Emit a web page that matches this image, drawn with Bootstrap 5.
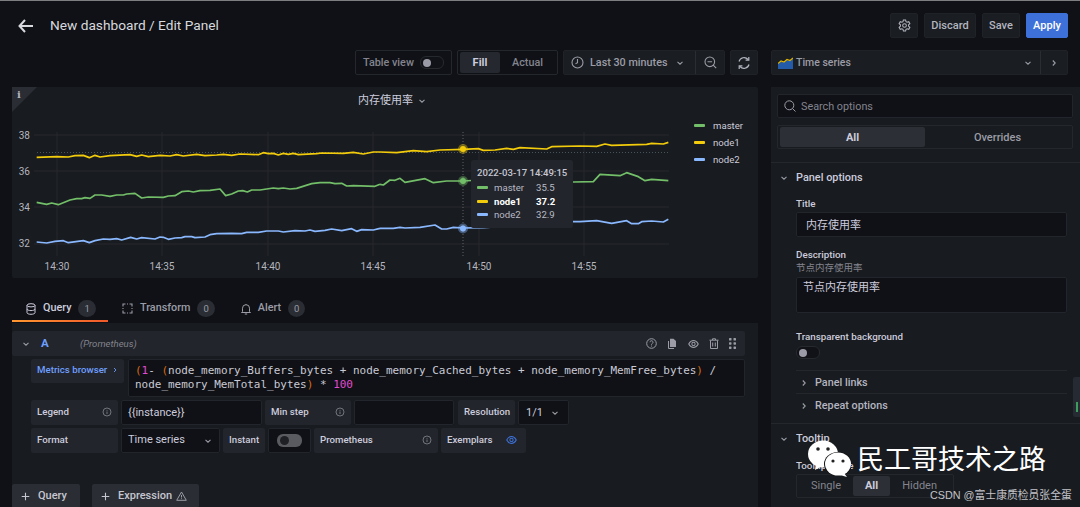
<!doctype html>
<html lang="zh">
<head>
<meta charset="utf-8">
<title>Edit Panel</title>
<link href="https://cdn.jsdelivr.net/npm/bootstrap@5.3.0/dist/css/bootstrap.min.css" rel="stylesheet">
<style>
html,body{height:507px;overflow:hidden;}
body{background:#111217;color:#ccccdc;font-family:Roboto,"Noto Sans CJK SC",sans-serif;font-size:11px;line-height:1.2;}
.gf-page{height:507px;border-top:1px solid #7d7e80;position:relative;overflow:hidden;background:#0f1116;}
.gf-head{height:49px;padding:0 12px 0 18px;}
.gf-title{font-size:13.7px;color:#d8d9de;margin-left:17px;font-weight:400;}
.gf-headbtns{gap:6px;}
.gf-btn{height:25px;padding:0;background:#1a1d21;border:1px solid #1f2227;border-radius:2px;color:#b4b5c0;font-weight:500;font-size:11px;display:flex;align-items:center;white-space:nowrap;}
.gf-apply{background:#3d71d9;border-color:#3d71d9;color:#fff;}
.gf-w28{width:28px;}.gf-w52{width:52px;}.gf-w38{width:38px;}.gf-w42{width:42px;}
.gf-w97{width:97px;}.gf-w101{width:101px;}.gf-w162{width:162px;}.gf-w297{width:297px;}
.gf-w29{width:29px;}.gf-w27{width:27px;}.gf-w93{width:93px;}.gf-w87{width:87px;}.gf-w141{width:141px;}.gf-w86{width:86px;}.gf-w100{width:100px;}.gf-w57{width:57px;}.gf-w51{width:51px;}.gf-w99{width:99px;}.gf-w43{width:43px;}.gf-w124{width:124px;}.gf-w85{width:85px;}.gf-w68{width:68px;}.gf-w107{width:107px;}
.gf-main{align-items:flex-start;}
.gf-left{width:746px;margin-left:12px;flex:none;}
.gf-right{width:309px;margin-left:13px;flex:none;}
.gf-bar{height:25px;gap:5px;}
.gf-outline{border:1px solid #24272c;border-radius:2px;height:25px;white-space:nowrap;}
.gf-dim{color:#83848e;font-weight:500;font-size:10.8px;}
.gf-nudge{padding-top:2px;}
.gf-tableview{gap:6px;padding-left:7px;}
.gf-fillwrap{padding:0 2px;}
.gf-fillon{background:#25282e;color:#ccccdc;font-weight:700;font-size:11px;height:21px;width:40px;border-radius:2px;}
.gf-timeicon{margin-left:7px;}
.gf-timetext{margin-left:6px;color:#9b9ca6;}
.gf-timechev{margin-left:7px;}
.gf-divl{border-left:1px solid #2a2d33;}
.gf-chart{margin-top:12px;height:191px;background:#181b1f;border-radius:2px;position:relative;}
.gf-chart svg.gf-plot{display:block;}
.gf-ptitle{position:absolute;left:346px;top:7px;font-size:11px;color:#ccccdc;}
.gf-legend{position:absolute;left:682px;top:30px;font-size:9.6px;color:#ccccdc;}
.gf-legrow{height:17px;}
.gf-sw{display:inline-block;width:11px;height:3px;border-radius:1px;flex:none;}
.gf-green{background:#73bf69;}.gf-yellow{background:#f2cc0c;}.gf-blue{background:#8ab8ff;}
.gf-tip{position:absolute;left:459px;top:73px;width:102px;height:68px;background:#22252b;border-radius:2px;padding:6px 6px;font-size:9.6px;color:#b9bac5;}
.gf-tip .gf-tt{font-weight:500;color:#c6c7d2;margin-bottom:1px;white-space:nowrap;line-height:14px;}
.gf-tiprow{height:13.5px;}
.gf-tipname{width:42px;margin-left:6px;}
.gf-tabs{height:45px;padding-top:17px;}
.gf-tab{height:27px;padding:2px 7px 0 14px;color:#9b9ca6;font-weight:500;font-size:10.8px;gap:7px;margin-right:5px;border-bottom:2px solid transparent;}
.gf-tab-on{color:#ccccdc;border-image:linear-gradient(90deg,#ff9830,#f0582a) 1;width:96px;margin-right:0;}
.gf-count{background:#2a2d33;color:#9b9ca6;font-size:9.5px;font-weight:400;border-radius:9px;padding:3px 6px;line-height:11px;}
.gf-query{background:#181b1f;height:185px;padding-top:8px;}
.gf-qhead{height:25px;background:#22252b;width:733px;border-radius:2px;padding:0 9px;}
.gf-a{color:#6e9fff;font-weight:700;font-size:11.5px;margin-left:10px;width:39px;}
.gf-ds{color:#83848e;font-style:italic;font-size:9.6px;}
.gf-qicons{gap:10px;}
.gf-rows{padding-left:19px;width:733px;}
.gf-rowa{margin-top:3px;gap:4px;}
.gf-rowb{margin-top:3px;gap:3px;}
.gf-lab{height:25px;background:#22252b;border-radius:2px;font-weight:500;font-size:9.7px;color:#ccccdc;padding:0 6px 2px;white-space:nowrap;}
.gf-input{height:25px;background:#101116;border:1px solid #22252b;border-radius:2px;color:#ccccdc;font-size:11px;padding:0 6px;box-shadow:none;min-height:0;}
.gf-input:focus{background:#101116;color:#ccccdc;border-color:#22252b;box-shadow:none;}
.gf-code{background:#101116;border:1px solid #22252b;border-radius:2px;height:38px;width:617px;padding:4px 6px;font-family:"DejaVu Sans Mono","Liberation Mono",monospace;font-size:10.97px;line-height:14px;color:#c9cad5;white-space:nowrap;}
.gf-o{color:#d96a10;}.gf-m{color:#e24bd1;}
.gf-link{color:#6e9fff;height:24px;gap:5px;}
.gf-res{margin-left:1px;}
.gf-box{height:25px;background:#101116;border:1px solid #22252b;border-radius:2px;font-size:11px;}
.gf-box-res{padding:0 8px 0 7px;}
.gf-box-fmt{padding:0 6px 2px;}
.gf-box-fmt svg{margin-top:2px;}
.gf-ex{gap:14px;}
.gf-toggle{width:24px;height:12px;border-radius:6px;position:relative;flex:none;}
.gf-toggle::after{content:"";position:absolute;top:2px;left:2px;width:8px;height:8px;border-radius:50%;background:#9a9ba6;}
.gf-toggle-a{background:#111217;border:1px solid #262a2f;height:13px;}
.gf-toggle-b{background:#5a5b60;width:25px;height:13px;}
.gf-toggle-b::after{background:#1e2025;top:2px;left:3px;width:9px;height:9px;}
.gf-addrow{margin-top:31px;gap:12px;}
.gf-add{height:24px;background:#2a2d33;color:#c5c6d0;font-weight:500;font-size:11px;border-radius:2px;padding:0 9px;gap:8px;}
.gf-warn{margin-left:-4px;}
.gf-tsicon{margin-left:6px;}
.gf-tstext{margin-left:3px;color:#9b9ca6;font-size:10.5px;}
.gf-tschev{margin-right:7px;}
.gf-side{margin-top:12px;background:#181b1f;height:420px;}
.gf-sidetop{padding:7px 7px 13px 6px;}
.gf-search{height:24px;background:#101116;border:1px solid #22252b;border-radius:2px;padding:0 6px;gap:5px;color:#83848e;font-size:10.8px;}
.gf-seg{height:24px;margin-top:7px;border:1px solid #24272c;border-radius:2px;padding:1px 2px;}
.gf-seg>div{flex:1;height:20px;color:#9b9ca6;font-weight:500;font-size:11px;border-radius:2px;padding-top:2px;}
.gf-seg>.gf-segon{background:#2c2f35;color:#ccccdc;font-weight:700;}
.gf-sec{border-top:1px solid #24272c;padding-right:13px;}
.gf-sec2{margin-top:7px;}
.gf-sechead{height:28px;padding:2px 0 0 8px;font-weight:500;font-size:10.9px;color:#ccccdc;gap:7px;}
.gf-body{padding-left:25px;}
.gf-flabel{height:16px;font-weight:500;font-size:9.8px;color:#ccccdc;}
.gf-fl1{margin-top:5px;}
.gf-titleinput{padding:0 6px 2px 9px;}
.gf-fl2{margin-top:10px;height:15px;}
.gf-sub{height:13px;color:#83848e;font-size:9.5px;}
.gf-ta{height:36px;resize:none;padding:3px 6px 0;line-height:14px;}
.gf-ta-wrap{margin-top:2px;}
.gf-fl3{margin-top:17px;height:14px;}
.gf-togwrap{margin-top:2px;}
.gf-sublink{height:23px;border-top:1px solid #24272c;font-weight:500;font-size:10.8px;color:#b4b5c0;padding:2px 0 0 3px;gap:6px;}
.gf-sl1{margin-top:11px;}
.gf-fl4{margin-top:6px;}
.gf-radio{width:158px;height:24px;border:1px solid #24272c;border-radius:2px;padding:1px 2px;}
.gf-radio>div{height:20px;padding:0 12px;color:#83848e;font-size:11px;}
.gf-radio>.gf-radon{background:#2c2f35;color:#ccccdc;font-weight:700;border-radius:2px;}
.gf-thumb{position:absolute;left:1073px;top:376px;width:7px;height:40px;background:#252a33;border-radius:2px 0 0 2px;}
.gf-thumb i{position:absolute;left:3px;top:25px;width:2px;height:10px;background:#3f9c5f;}
.gf-mark{position:absolute;left:808px;top:437px;gap:6px;color:#fff;font-size:27px;line-height:40px;font-family:"Noto Sans CJK SC",sans-serif;font-weight:400;white-space:nowrap;}
.gf-csdn{position:absolute;left:930px;top:487px;color:#c2c3c8;font-size:10.8px;line-height:15px;white-space:nowrap;font-family:"Liberation Sans","Noto Sans CJK SC",sans-serif;}
svg{flex:none;}
</style>
</head>
<body>
<svg width="0" height="0" class="d-none">
<symbol id="i-info" viewBox="0 0 12 12"><circle cx="6" cy="6" r="4.8" fill="none" stroke="currentColor"/><path d="M6 5.400v3M6 3.500v1" stroke="currentColor"/></symbol>
<symbol id="i-down" viewBox="0 0 10 10"><path d="M2.500 3.800 5 6.200l2.500-2.400" fill="none" stroke="currentColor" stroke-width="1.100"/></symbol>
<symbol id="i-right" viewBox="0 0 10 10"><path d="M3.800 2.500 6.200 5 3.800 7.500" fill="none" stroke="currentColor" stroke-width="1.100"/></symbol>
<symbol id="i-plus" viewBox="0 0 10 10"><path d="M5 .8v8.400M.8 5h8.400" fill="none" stroke="currentColor" stroke-width="1.200"/></symbol>
<symbol id="i-eye" viewBox="0 0 12 10"><path d="M.8 5C2.200 2.400 4 1.200 6 1.200S9.800 2.400 11.200 5C9.800 7.600 8 8.800 6 8.800S2.200 7.600.8 5Z" fill="none" stroke="currentColor" stroke-width="1.100"/><circle cx="6" cy="5" r="1.800" fill="none" stroke="currentColor" stroke-width="1.100"/></symbol>
</svg>
<div class="gf-page">
  <div class="gf-head d-flex align-items-center">
    <svg width="15" height="14" viewBox="0 0 15 14" color="#d8d9de"><path d="M7 1 1.500 7 7 13M2 7h13" fill="none" stroke="currentColor" stroke-width="2"/></svg>
    <h1 class="gf-title mb-0">New dashboard / Edit Panel</h1>
    <div class="ms-auto d-flex gf-headbtns">
      <div class="gf-btn gf-w28 justify-content-center">
        <svg width="13" height="13" viewBox="0 0 14 14"><path d="M5.800 1h2.400l.4 1.800 1.200.7 1.800-.6L12.800 5l-1.400 1.200v1.600L12.800 9l-1.200 2.100-1.800-.6-1.200.7L8.200 13H5.800l-.4-1.800-1.200-.7-1.800.6L1.200 9l1.400-1.200V6.200L1.200 5l1.200-2.100 1.800.6 1.200-.7Z" fill="none" stroke="#b4b5c0" stroke-width="1.100"/><circle cx="7" cy="7" r="2" fill="none" stroke="#b4b5c0" stroke-width="1.100"/></svg>
      </div>
      <div class="gf-btn gf-w52 justify-content-center">Discard</div>
      <div class="gf-btn gf-w38 justify-content-center">Save</div>
      <div class="gf-btn gf-w42 gf-apply justify-content-center">Apply</div>
    </div>
  </div>
  <div class="gf-main d-flex">
    <div class="gf-left">
      <div class="gf-bar d-flex justify-content-end">
        <div class="gf-outline gf-w97 gf-tableview d-flex align-items-center gf-dim"><span class="gf-nudge">Table view</span> <span class="gf-toggle gf-toggle-a"></span></div>
        <div class="gf-outline gf-w101 gf-fillwrap d-flex align-items-center">
          <div class="gf-fillon d-flex align-items-center justify-content-center">Fill</div>
          <div class="gf-dim gf-nudge flex-fill text-center">Actual</div>
        </div>
        <div class="gf-btn gf-w162 gf-dim">
          <svg class="gf-timeicon" width="13" height="13" viewBox="0 0 13 13"><circle cx="6.500" cy="6.500" r="5.500" fill="none" stroke="#9b9ca6" stroke-width="1.100"/><path d="M6.500 3v3.700l-2 1" fill="none" stroke="#9b9ca6" stroke-width="1.100"/></svg>
          <span class="gf-timetext gf-nudge">Last 30 minutes</span>
          <svg class="gf-timechev" width="10" height="10" color="#9b9ca6"><use href="#i-down"/></svg>
          <div class="gf-w29 gf-divl ms-auto d-flex align-items-center justify-content-center h-100">
            <svg width="13" height="13" viewBox="0 0 13 13"><circle cx="5.800" cy="5.800" r="4.800" fill="none" stroke="#9b9ca6" stroke-width="1.100"/><path d="M3.500 5.800h4.600M9.200 9.200l3 3" fill="none" stroke="#9b9ca6" stroke-width="1.100"/></svg>
          </div>
        </div>
        <div class="gf-btn gf-w28 justify-content-center">
          <svg width="14" height="14" viewBox="0 0 14 14"><path d="M2 5.500A5.200 5.200 0 0 1 11 3.500M12 8.500A5.200 5.200 0 0 1 3 10.500" fill="none" stroke="#b4b5c0" stroke-width="1.200"/><path d="M11.800 1v3.200H8.600M2.200 13V9.800h3.200" fill="none" stroke="#b4b5c0" stroke-width="1.200"/></svg>
        </div>
      </div>
      <div class="gf-chart">
        <svg class="gf-plot" width="746" height="191" viewBox="12 87 746 191" font-family="Roboto,sans-serif">
          <polygon points="12,87 37,87 12,112" fill="#2a2d33"/>
          <text x="17" y="98" font-size="10" font-weight="700" font-family="'DejaVu Serif',serif" fill="#b4b5c0">i</text>
          <g stroke="#26292e" stroke-width="1">
            <path d="M34 135H669M34 171H669M34 207H669M34 244H669"/>
            <path d="M57 132V256M162 132V256M268 132V256M373 132V256M479 132V256M584 132V256"/>
          </g>
          <path d="M37 152.500H669" stroke="#47535a" stroke-dasharray="1 2" fill="none"/>
          <path d="M463 132V256" stroke="#5f6269" stroke-dasharray="1 2" fill="none"/>
          <g fill="#b4b5be" font-size="10" text-anchor="end"><text x="30" y="138.500">38</text><text x="30" y="174.500">36</text><text x="30" y="210.500">34</text><text x="30" y="246.500">32</text></g>
          <g fill="#b4b5be" font-size="10" text-anchor="middle"><text x="57" y="270">14:30</text><text x="162" y="270">14:35</text><text x="268" y="270">14:40</text><text x="373" y="270">14:45</text><text x="479" y="270">14:50</text><text x="584" y="270">14:55</text></g>
          <g fill="none" stroke-width="1.700" stroke-linejoin="round">
            <g transform="translate(0 120) scale(.33333)">
              <polyline vector-effect="non-scaling-stroke" stroke="#f2cc0c" points="110,112 170,110 205,111 225,107 250,106 268,113 285,106 300,111 330,107 390,104 410,109 425,105 445,110 480,106 510,108 530,104 550,108 590,103 615,107 650,105 670,103 695,106 720,102 775,104 790,98 805,101 820,100 835,105 850,100 865,103 880,100 895,104 950,101 965,99 1030,100 1060,97 1090,102 1120,96 1140,96"/>
              <polyline vector-effect="non-scaling-stroke" stroke="#73bf69" points="110,247 140,253 155,249 175,254 210,240 230,236 245,236 255,233 270,235 285,225 305,225 330,229 350,225 370,225 380,222 405,220 425,234 445,231 490,232 505,228 525,227 545,215 565,213 580,216 600,212 630,211 660,207 677,227 695,222 715,213 728,212 742,216 755,210 780,210 820,204 835,206 850,204 870,207 890,205 935,191 960,188 990,188 1005,191 1025,190 1040,198 1060,197 1125,199 1140,193"/>
              <polyline vector-effect="non-scaling-stroke" stroke="#8ab8ff" points="110,366 140,369 165,364 190,362 205,368 250,362 268,368 285,362 310,357 330,358 350,356 365,360 392,352 410,357 425,353 465,357 480,351 490,352 505,358 525,354 545,353 555,350 575,350 585,353 615,351 630,344 650,341 695,340 725,341 740,337 775,337 800,333 835,333 850,336 885,332 915,333 930,330 945,334 975,331 995,327 1025,332 1055,326 1070,334 1085,329 1120,330 1140,325"/>
            </g>
            <g transform="translate(380 120) scale(.33333)">
              <polyline vector-effect="non-scaling-stroke" stroke="#f2cc0c" points="0,96 50,98 100,92 140,95 180,90 250,88 295,86 310,91 345,90 380,85 400,88 420,83 500,87 515,80 600,78 650,79 675,72 695,76 800,73 815,70 850,72 865,67"/>
              <polyline vector-effect="non-scaling-stroke" stroke="#73bf69" points="0,193 10,195 30,180 45,181 60,175 75,187 135,176 160,188 200,183 250,183 300,180 580,186 640,185 660,163 720,167 740,158 775,170 795,182 815,178 865,182"/>
              <polyline vector-effect="non-scaling-stroke" stroke="#8ab8ff" points="0,325 40,325 60,322 75,324 120,322 165,315 185,327 200,327 220,322 250,324 310,323 580,305 600,305 650,302 695,310 740,302 755,311 775,311 785,305 815,303 850,306 865,298"/>
            </g>
          </g>
          <circle cx="463" cy="149" r="5" fill="#f2cc0c" opacity=".4"/><circle cx="463" cy="149" r="3" fill="#f2cc0c"/>
          <circle cx="463" cy="181" r="5" fill="#73bf69" opacity=".4"/><circle cx="463" cy="181" r="3" fill="#73bf69"/>
          <circle cx="463" cy="228.500" r="5" fill="#8ab8ff" opacity=".4"/><circle cx="463" cy="228.500" r="3" fill="#8ab8ff"/>
        </svg>
        <div class="gf-ptitle d-flex align-items-center gap-1">内存使用率 <svg width="10" height="10" color="#9b9ca6"><use href="#i-down"/></svg></div>
        <div class="gf-legend">
          <div class="gf-legrow d-flex align-items-center gap-2"><span class="gf-sw gf-green"></span>master</div>
          <div class="gf-legrow d-flex align-items-center gap-2"><span class="gf-sw gf-yellow"></span>node1</div>
          <div class="gf-legrow d-flex align-items-center gap-2"><span class="gf-sw gf-blue"></span>node2</div>
        </div>
        <div class="gf-tip">
          <div class="gf-tt">2022-03-17 14:49:15</div>
          <div class="gf-tiprow d-flex align-items-center"><span class="gf-sw gf-green"></span><span class="gf-tipname">master</span><span>35.5</span></div>
          <div class="gf-tiprow d-flex align-items-center fw-bold text-white"><span class="gf-sw gf-yellow"></span><span class="gf-tipname">node1</span><span>37.2</span></div>
          <div class="gf-tiprow d-flex align-items-center"><span class="gf-sw gf-blue"></span><span class="gf-tipname">node2</span><span>32.9</span></div>
        </div>
      </div>
      <div class="gf-tabs d-flex">
        <div class="gf-tab gf-tab-on d-flex align-items-center">
          <svg width="10" height="12" viewBox="0 0 10 12"><ellipse cx="5" cy="2.300" rx="4" ry="1.600" fill="none" stroke="#ccccdc"/><path d="M1 2.300v7.400c0 .9 1.800 1.600 4 1.600s4-.7 4-1.600V2.300M1 6c0 .9 1.800 1.600 4 1.600S9 6.900 9 6" fill="none" stroke="#ccccdc"/></svg>
          <span>Query</span><span class="gf-count">1</span>
        </div>
        <div class="gf-tab d-flex align-items-center">
          <svg width="11" height="11" viewBox="0 0 11 11"><path d="M1 3.500V1h2.500M7.500 1H10v2.500M10 7.500V10H7.500M3.500 10H1V7.500M5 1h1M5 10h1M1 5v1M10 5v1" fill="none" stroke="#9b9ca6" stroke-width="1.100"/></svg>
          <span>Transform</span><span class="gf-count">0</span>
        </div>
        <div class="gf-tab d-flex align-items-center">
          <svg width="10" height="12" viewBox="0 0 10 12"><path d="M1.500 8.500V5.200a3.500 3.500 0 0 1 7 0v3.300l1 1H.5ZM5 1v.6M3.800 11h2.400" fill="none" stroke="#9b9ca6"/></svg>
          <span>Alert</span><span class="gf-count">0</span>
        </div>
      </div>
      <div class="gf-query">
        <div class="gf-qhead d-flex align-items-center">
          <svg width="10" height="10" color="#9b9ca6"><use href="#i-down"/></svg>
          <span class="gf-a">A</span><span class="gf-ds">(Prometheus)</span>
          <div class="gf-qicons ms-auto d-flex align-items-center" color="#9b9ca6">
            <svg width="11" height="11" viewBox="0 0 11 11"><circle cx="5.500" cy="5.500" r="4.800" fill="none" stroke="#9b9ca6"/><path d="M4 4.200a1.500 1.500 0 1 1 2.300 1.300c-.5.300-.8.600-.8 1.200M5.500 7.600v.9" fill="none" stroke="#9b9ca6"/></svg>
            <svg width="11" height="11" viewBox="0 0 11 11"><path d="M3 .8h3.500L9 3v6H3Z" fill="#9b9ca6"/><path d="M1.500 3v7.500H7" fill="none" stroke="#9b9ca6"/></svg>
            <svg width="11" height="10" color="#9b9ca6"><use href="#i-eye"/></svg>
            <svg width="10" height="11" viewBox="0 0 10 11"><path d="M.5 2.200h9M3.500 2V.8h3V2M1.500 2.500v8h7v-8M3.700 4.500v4M6.300 4.500v4" fill="none" stroke="#9b9ca6"/></svg>
            <svg width="7" height="11" viewBox="0 0 7 11" fill="#9b9ca6"><rect width="2.500" height="2.500" rx=".6"/><rect x="4.500" width="2.500" height="2.500" rx=".6"/><rect y="4.200" width="2.500" height="2.500" rx=".6"/><rect x="4.500" y="4.200" width="2.500" height="2.500" rx=".6"/><rect y="8.400" width="2.500" height="2.500" rx=".6"/><rect x="4.500" y="8.400" width="2.500" height="2.500" rx=".6"/></svg>
          </div>
        </div>
        <div class="gf-rows">
          <div class="gf-rowa d-flex">
            <div class="gf-lab gf-link gf-w93 d-flex align-items-center">Metrics browser <svg width="8" height="10" viewBox="1 0 8 10"><use href="#i-right"/></svg></div>
            <div class="gf-code"><span class="gf-o">(</span><span class="gf-m">1</span>- <span class="gf-o">(</span>node_memory_Buffers_bytes + node_memory_Cached_bytes + node_memory_MemFree_bytes<span class="gf-o">)</span> /<br>node_memory_MemTotal_bytes<span class="gf-o">)</span> * <span class="gf-m">100</span></div>
          </div>
          <div class="gf-rowb d-flex">
            <div class="gf-lab gf-w87 d-flex align-items-center justify-content-between">Legend <svg width="10" height="10" color="#83848e"><use href="#i-info"/></svg></div>
            <input class="form-control gf-input gf-w141" value="{{instance}}" aria-label="Legend">
            <div class="gf-lab gf-w86 d-flex align-items-center justify-content-between">Min step <svg width="10" height="10" color="#83848e"><use href="#i-info"/></svg></div>
            <input class="form-control gf-input gf-w100" aria-label="Min step">
            <div class="gf-lab gf-w57 gf-res d-flex align-items-center">Resolution</div>
            <div class="gf-box gf-w51 gf-box-res d-flex align-items-center justify-content-between">1/1 <svg width="10" height="10" color="#9b9ca6"><use href="#i-down"/></svg></div>
          </div>
          <div class="gf-rowb d-flex">
            <div class="gf-lab gf-w87 d-flex align-items-center">Format</div>
            <div class="gf-box gf-w99 gf-box-fmt d-flex align-items-center justify-content-between">Time series <svg width="10" height="10" color="#9b9ca6"><use href="#i-down"/></svg></div>
            <div class="gf-lab gf-w42 d-flex align-items-center">Instant</div>
            <div class="gf-box gf-w43 d-flex align-items-center justify-content-center"><span class="gf-toggle gf-toggle-b"></span></div>
            <div class="gf-lab gf-w124 d-flex align-items-center justify-content-between">Prometheus <svg width="10" height="10" color="#83848e"><use href="#i-info"/></svg></div>
            <div class="gf-lab gf-w85 gf-ex d-flex align-items-center">Exemplars <svg width="11" height="10" color="#3d71d9"><use href="#i-eye"/></svg></div>
          </div>
        </div>
        <div class="gf-addrow d-flex">
          <div class="gf-add gf-w68 d-flex align-items-center"><svg width="9" height="9" viewBox="0 0 10 10"><use href="#i-plus"/></svg><span>Query</span></div>
          <div class="gf-add gf-w107 d-flex align-items-center"><svg width="9" height="9" viewBox="0 0 10 10"><use href="#i-plus"/></svg><span>Expression</span><svg class="gf-warn" width="11" height="10" viewBox="0 0 11 10"><path d="M5.500 1 10.300 9.300H.7Z M5.500 4v2.500M5.500 7.300v.8" fill="none" stroke="#9b9ca6"/></svg></div>
        </div>
      </div>
    </div>
    <div class="gf-right">
      <div class="gf-btn gf-w297 gf-dim">
        <svg class="gf-tsicon" width="15" height="12" viewBox="0 0 15 12"><path d="M0 7 3 4.500l3 1L9 3l3 1 3-2.500V12H0Z" fill="#245ba8"/><path d="M0 6.500 3 4l3 1 3-2.500 3 1L15 1" fill="none" stroke="#e0b400" stroke-width="1.200"/></svg>
        <span class="gf-tstext gf-nudge">Time series</span>
        <svg class="gf-tschev ms-auto" width="10" height="10" color="#9b9ca6"><use href="#i-down"/></svg>
        <div class="gf-w27 gf-divl d-flex align-items-center justify-content-center h-100"><svg width="10" height="10" color="#9b9ca6"><use href="#i-right"/></svg></div>
      </div>
      <div class="gf-side">
        <div class="gf-sidetop">
          <div class="gf-search d-flex align-items-center">
            <svg width="12" height="12" viewBox="0 0 12 12"><circle cx="5.300" cy="5.300" r="4.500" fill="none" stroke="#9b9ca6"/><path d="M8.500 8.500l3 3" stroke="#9b9ca6"/></svg><span class="gf-nudge">Search options</span>
          </div>
          <div class="gf-seg d-flex"><div class="gf-segon d-flex align-items-center justify-content-center">All</div><div class="d-flex align-items-center justify-content-center">Overrides</div></div>
        </div>
        <div class="gf-sec">
          <div class="gf-sechead d-flex align-items-center"><svg width="10" height="10" color="#9b9ca6"><use href="#i-down"/></svg>Panel options</div>
          <div class="gf-body">
            <div class="gf-flabel gf-fl1 d-flex align-items-center">Title</div>
            <input class="form-control gf-input gf-titleinput" value="内存使用率" aria-label="Title">
            <div class="gf-flabel gf-fl2 d-flex align-items-center">Description</div>
            <div class="gf-sub">节点内存使用率</div>
            <div class="gf-ta-wrap"><textarea class="form-control gf-input gf-ta" aria-label="Description">节点内存使用率</textarea></div>
            <div class="gf-flabel gf-fl3 d-flex align-items-center">Transparent background</div>
            <div class="gf-togwrap"><span class="gf-toggle gf-toggle-a d-block"></span></div>
            <div class="gf-sublink gf-sl1 d-flex align-items-center"><svg width="10" height="10" color="#9b9ca6"><use href="#i-right"/></svg>Panel links</div>
            <div class="gf-sublink d-flex align-items-center"><svg width="10" height="10" color="#9b9ca6"><use href="#i-right"/></svg>Repeat options</div>
          </div>
        </div>
        <div class="gf-sec gf-sec2">
          <div class="gf-sechead d-flex align-items-center"><svg width="10" height="10" color="#9b9ca6"><use href="#i-down"/></svg>Tooltip</div>
          <div class="gf-body">
            <div class="gf-flabel gf-fl4 d-flex align-items-center">Tooltip mode</div>
            <div class="gf-radio d-flex"><div class="d-flex align-items-center">Single</div><div class="gf-radon d-flex align-items-center">All</div><div class="d-flex align-items-center">Hidden</div></div>
          </div>
        </div>
      </div>
    </div>
  </div>
  <div class="gf-thumb"><i></i></div>
  <div class="gf-mark d-flex align-items-center">
    <svg width="43" height="37" viewBox="0 0 43 37">
      <ellipse cx="15" cy="14" rx="15" ry="13.500" fill="#fff"/><path d="M8 24l-1 6 7-4Z" fill="#fff"/>
      <ellipse cx="30" cy="24" rx="14" ry="12" fill="#111"/>
      <ellipse cx="30" cy="24" rx="13" ry="11.500" fill="#fff"/><path d="M36 33l3 4-7-2Z" fill="#fff"/>
      <circle cx="10" cy="9" r="1.800" fill="#222"/><circle cx="20" cy="9" r="1.800" fill="#222"/><circle cx="25" cy="21" r="1.600" fill="#222"/><circle cx="35" cy="21" r="1.600" fill="#222"/>
    </svg>
    <span>民工哥技术之路</span>
  </div>
  <div class="gf-csdn">CSDN @富士康质检员张全蛋</div>
</div>
</body>
</html>
